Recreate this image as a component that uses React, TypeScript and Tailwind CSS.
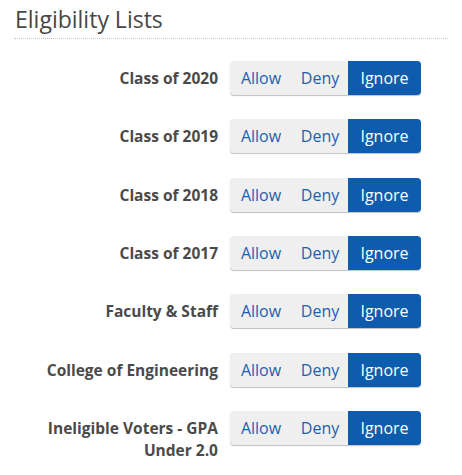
const lists = [
  'Class of 2020',
  'Class of 2019',
  'Class of 2018',
  'Class of 2017',
  'Faculty & Staff',
  'College of Engineering',
  'Ineligible Voters - GPA Under 2.0',
]

function Toggle() {
  return (
    <div className="flex h-[34px] rounded-[4px] bg-[#efefef] shadow-[0_1px_1px_rgba(0,0,0,0.25)] text-[16px] leading-none">
      <button className="w-[62px] text-[#1d5fae]">Allow</button>
      <button className="w-[56px] text-[#1d5fae]">Deny</button>
      <button className="w-[73px] rounded-r-[4px] bg-[#0e5cad] text-white">Ignore</button>
    </div>
  )
}

export default function App() {
  return (
    <div className="min-h-screen bg-white px-[14px] font-['Open_Sans',sans-serif]">
      <h2 className="pt-[6px] pb-[5px] pl-[1px] text-[23px] leading-[27px] text-[#474747] border-b border-dotted border-[#c4c4c4]">
        Eligibility Lists
      </h2>
      <div className="mt-[22px] flex flex-col gap-[24.33px]">
        {lists.map((name) => (
          <div key={name} className="flex items-start">
            <label className="w-[204px] pt-[6px] text-right text-[15.5px] font-bold leading-[22px] text-[#4a4a4a]">
              {name}
            </label>
            <div className="ml-[12px]">
              <Toggle />
            </div>
          </div>
        ))}
      </div>
    </div>
  )
}
